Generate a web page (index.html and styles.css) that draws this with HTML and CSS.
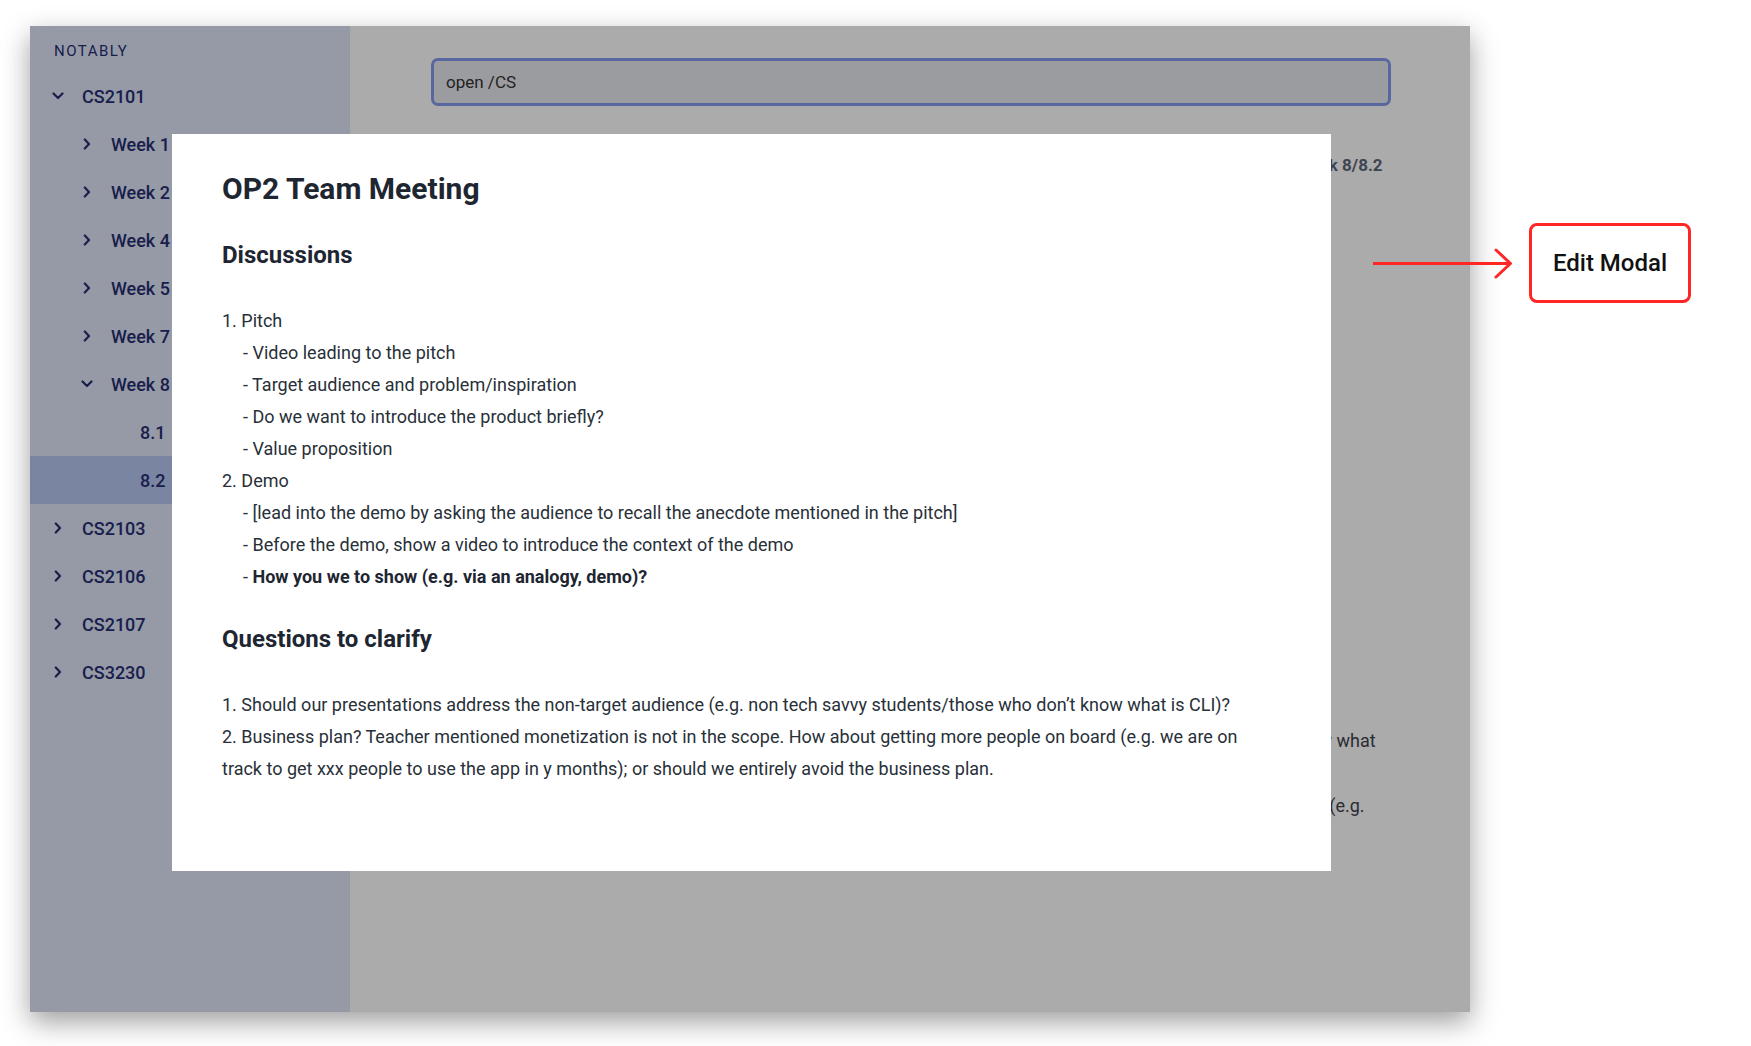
FILE: index.html
```html
<!DOCTYPE html>
<html lang="en">
<head>
<meta charset="utf-8">
<title>Notably - Edit Modal</title>
<link rel="stylesheet" href="styles.css">
</head>
<body>
<div class="canvas">
  <div class="app">
    <aside class="sidebar">
      <div class="brand">NOTABLY</div>
      <ul class="tree">
        <li class="row lvl1"><span class="chev"><svg width="12" height="8" viewBox="0 0 12 8"><path d="M1.5 1.5 L6 6 L10.5 1.5"/></svg></span><span class="label">CS2101</span></li>
        <li class="row lvl2"><span class="chev"><svg width="8" height="12" viewBox="0 0 8 12"><path d="M1.8 1.5 L6 6 L1.8 10.5"/></svg></span><span class="label">Week 1</span></li>
        <li class="row lvl2"><span class="chev"><svg width="8" height="12" viewBox="0 0 8 12"><path d="M1.8 1.5 L6 6 L1.8 10.5"/></svg></span><span class="label">Week 2</span></li>
        <li class="row lvl2"><span class="chev"><svg width="8" height="12" viewBox="0 0 8 12"><path d="M1.8 1.5 L6 6 L1.8 10.5"/></svg></span><span class="label">Week 4</span></li>
        <li class="row lvl2"><span class="chev"><svg width="8" height="12" viewBox="0 0 8 12"><path d="M1.8 1.5 L6 6 L1.8 10.5"/></svg></span><span class="label">Week 5</span></li>
        <li class="row lvl2"><span class="chev"><svg width="8" height="12" viewBox="0 0 8 12"><path d="M1.8 1.5 L6 6 L1.8 10.5"/></svg></span><span class="label">Week 7</span></li>
        <li class="row lvl2"><span class="chev"><svg width="12" height="8" viewBox="0 0 12 8"><path d="M1.5 1.5 L6 6 L10.5 1.5"/></svg></span><span class="label">Week 8</span></li>
        <li class="row lvl3"><span class="chev"></span><span class="label">8.1</span></li>
        <li class="row lvl3 selected"><span class="chev"></span><span class="label">8.2</span></li>
        <li class="row lvl1"><span class="chev"><svg width="8" height="12" viewBox="0 0 8 12"><path d="M1.8 1.5 L6 6 L1.8 10.5"/></svg></span><span class="label">CS2103</span></li>
        <li class="row lvl1"><span class="chev"><svg width="8" height="12" viewBox="0 0 8 12"><path d="M1.8 1.5 L6 6 L1.8 10.5"/></svg></span><span class="label">CS2106</span></li>
        <li class="row lvl1"><span class="chev"><svg width="8" height="12" viewBox="0 0 8 12"><path d="M1.8 1.5 L6 6 L1.8 10.5"/></svg></span><span class="label">CS2107</span></li>
        <li class="row lvl1"><span class="chev"><svg width="8" height="12" viewBox="0 0 8 12"><path d="M1.8 1.5 L6 6 L1.8 10.5"/></svg></span><span class="label">CS3230</span></li>
      </ul>
    </aside>

    <main class="main">
      <div class="search"><span class="search-text">open /CS</span></div>
      <div class="note">
        <div class="note-head"><span class="crumb">CS2101/Week 8/8.2</span></div>
        <div class="note-body">
          <p class="bg-line">1. Should our presentations address the non-target audience (e.g. non tech savvy students/those who don’t know what</p>
          <p class="bg-line second">2. Business plan? Teacher mentioned monetization is not in the scope. How about getting more people on board (e.g.</p>
        </div>
      </div>
    </main>

    <div class="backdrop"></div>

    <section class="modal">
      <h1 class="modal-title">OP2 Team Meeting</h1>
      <h2 class="section-title">Discussions</h2>
      <div class="block">
        <p class="line">1. Pitch</p>
        <p class="line sub">- Video leading to the pitch</p>
        <p class="line sub">- Target audience and problem/inspiration</p>
        <p class="line sub">- Do we want to introduce the product briefly?</p>
        <p class="line sub">- Value proposition</p>
        <p class="line">2. Demo</p>
        <p class="line sub">- [lead into the demo by asking the audience to recall the anecdote mentioned in the pitch]</p>
        <p class="line sub">- Before the demo, show a video to introduce the context of the demo</p>
        <p class="line sub">- <strong>How you we to show (e.g. via an analogy, demo)?</strong></p>
      </div>
      <h2 class="section-title">Questions to clarify</h2>
      <div class="block">
        <p class="line">1. Should our presentations address the non-target audience (e.g. non tech savvy students/those who don’t know what is CLI)?</p>
        <p class="line">2. Business plan? Teacher mentioned monetization is not in the scope. How about getting more people on board (e.g. we are on track to get xxx people to use the app in y months); or should we entirely avoid the business plan.</p>
      </div>
    </section>
  </div>

  <div class="annotation">
    <svg class="arrow" width="146" height="33" viewBox="0 0 146 33">
      <path class="arrow-line" d="M3 16.5 L140 16.5"/>
      <path class="arrow-head" d="M126 3 L140.5 16.5 L126 30"/>
    </svg>
    <div class="callout">Edit Modal</div>
  </div>
</div>
</body>
</html>
```

FILE: styles.css
```css
* {
  box-sizing: border-box;
}

html, body {
  margin: 0;
  padding: 0;
  background: #ffffff;
}

body {
  font-family: Roboto, "Liberation Sans", Arial, sans-serif;
}

.canvas {
  position: relative;
  width: 1751px;
  height: 1046px;
  padding: 26px 0 0 30px;
}

.app {
  position: relative;
  display: flex;
  width: 1440px;
  height: 986px;
  box-shadow: 0 10px 26px rgba(0, 0, 0, 0.38);
  overflow: hidden;
}

/* ---------- Sidebar ---------- */
.sidebar {
  width: 320px;
  flex: none;
  background: #dee6f8;
  padding-top: 15px;
  color: #282e72;
}

.brand {
  padding-left: 24px;
  font-size: 15px;
  line-height: 20px;
  letter-spacing: 1.5px;
  font-weight: 400;
  margin-bottom: 11px;
}

.tree {
  list-style: none;
  margin: 0;
  padding: 0;
}

.row {
  display: flex;
  align-items: center;
  height: 48px;
  font-size: 18px;
  font-weight: 500;
}

.row.lvl1 { padding-left: 22px; }
.row.lvl2 { padding-left: 51px; }
.row.lvl3 { padding-left: 80px; }

.row.selected {
  background: #b6c6f2;
}

.chev {
  width: 12px;
  height: 12px;
  margin-right: 18px;
  display: flex;
  align-items: center;
  justify-content: center;
  flex: none;
}

.chev svg {
  display: block;
}

.chev path {
  fill: none;
  stroke: #282e72;
  stroke-width: 2.2;
  stroke-linecap: round;
  stroke-linejoin: round;
}

.label {
  white-space: nowrap;
}

/* ---------- Main ---------- */
.main {
  flex: 1;
  background: #ffffff;
  padding: 32px 81px 0;
  display: flex;
  flex-direction: column;
}

.search {
  height: 48px;
  border: 3px solid #849aef;
  border-radius: 7px;
  background: #e8e9ef;
  display: flex;
  align-items: center;
  padding-left: 12px;
}

.search-text {
  font-size: 17px;
  color: #333333;
}

.note-head {
  margin-top: 47px;
  text-align: right;
  padding-right: 8px;
  line-height: 24px;
}

.crumb {
  font-size: 17px;
  font-weight: 700;
  color: #5e677a;
}

.note-body {
  padding-top: 547px;
}

.bg-line {
  margin: 0;
  font-size: 18px;
  line-height: 32px;
  color: #3f434c;
  white-space: nowrap;
  text-align: right;
  padding-right: 15px;
}

.bg-line.second {
  margin-top: 33px;
  padding-right: 26px;
}

/* ---------- Modal ---------- */
.backdrop {
  position: absolute;
  inset: 0;
  background: rgba(0, 0, 0, 0.33);
}

.modal {
  position: absolute;
  left: 142px;
  top: 108px;
  width: 1159px;
  height: 737px;
  background: #ffffff;
  padding: 37px 50px 0 50px;
  color: #283039;
}

.modal-title {
  margin: 0 0 32px;
  font-size: 30px;
  line-height: 36px;
  font-weight: 700;
  color: #1e2632;
}

.section-title {
  margin: 0 0 34px;
  font-size: 24px;
  line-height: 32px;
  font-weight: 700;
  color: #1e2632;
}

.block {
  margin-bottom: 30px;
}

.line {
  margin: 0;
  font-size: 18px;
  line-height: 32px;
}

.line.sub {
  padding-left: 21px;
}

.line strong {
  font-weight: 700;
  color: #1e2632;
}

/* ---------- Annotation ---------- */
.annotation {
  position: absolute;
  left: 0;
  top: 0;
}

.arrow {
  position: absolute;
  left: 1370px;
  top: 247px;
  overflow: visible;
}

.arrow path {
  fill: none;
  stroke: #ff2626;
  stroke-width: 3;
}

.arrow-head {
  stroke-linecap: round;
  stroke-linejoin: round;
}

.callout {
  position: absolute;
  left: 1529px;
  top: 223px;
  width: 162px;
  height: 80px;
  border: 3px solid #ff2626;
  border-radius: 8px;
  background: #ffffff;
  display: flex;
  align-items: center;
  justify-content: center;
  font-size: 24px;
  font-weight: 500;
  color: #111111;
  white-space: nowrap;
}
```
